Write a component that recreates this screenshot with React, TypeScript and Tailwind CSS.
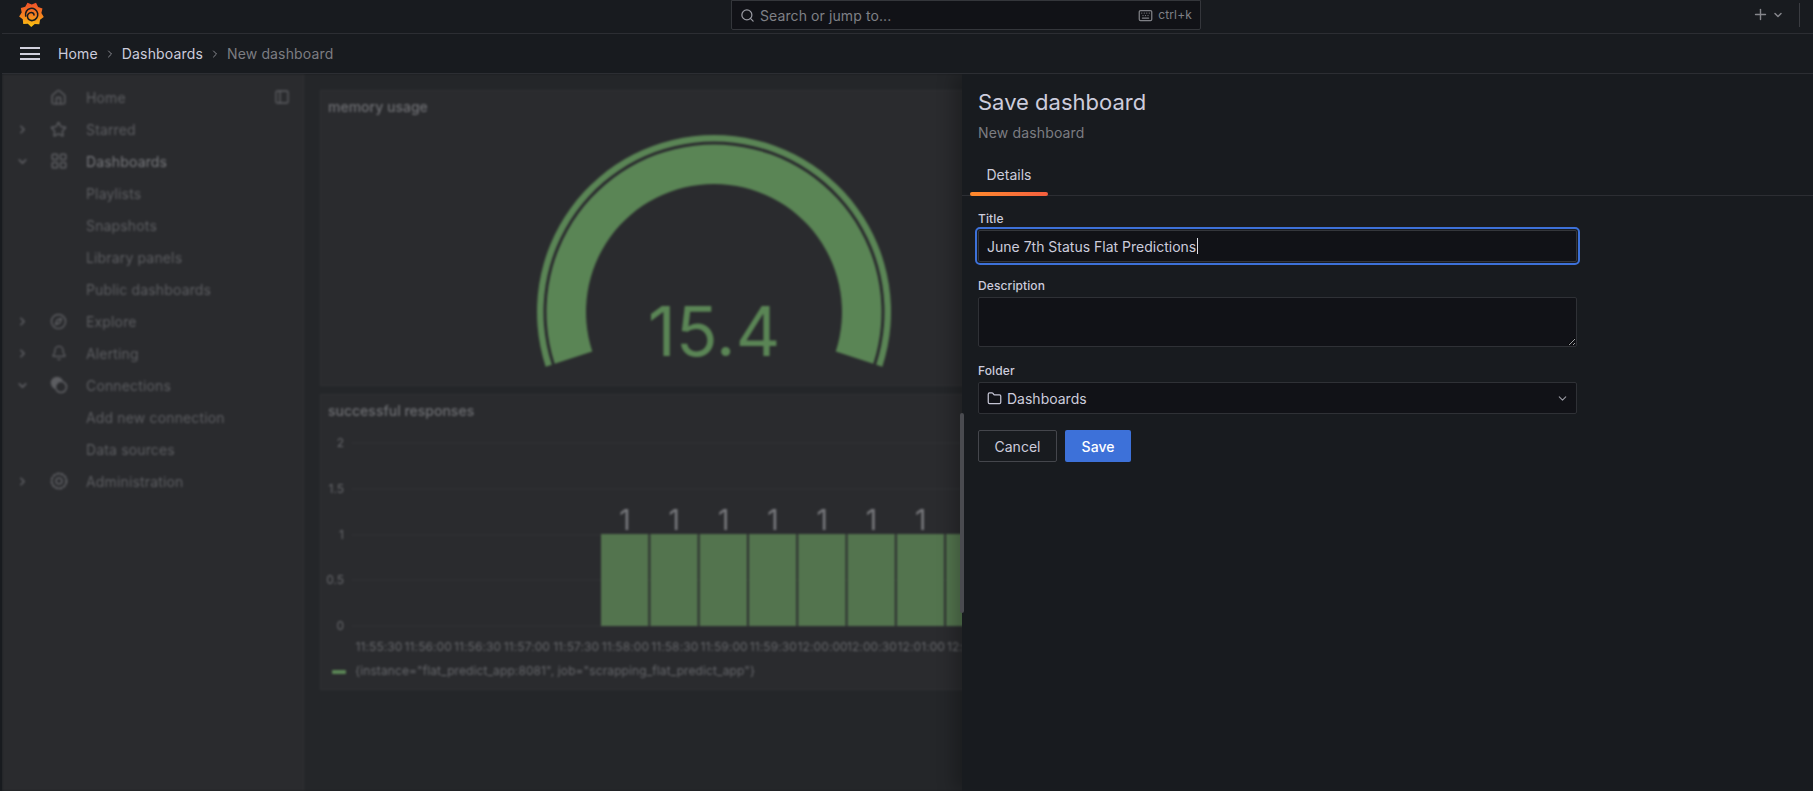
import { Bell, ChevronDown, ChevronRight, Compass, Folder, Home, Keyboard, LayoutGrid, PanelLeft, Plus, Search, Star } from "lucide-react";
import type { ReactNode } from "react";

const CX = 393;
const CY = 221;

function arc(outer: number, inner: number) {
  const a = (18 * Math.PI) / 180;
  const ox = outer * Math.cos(a);
  const oy = outer * Math.sin(a);
  const ix = inner * Math.cos(a);
  const iy = inner * Math.sin(a);
  return `M${CX - ox} ${CY + oy} A${outer} ${outer} 0 1 1 ${CX + ox} ${CY + oy} L${CX + ix} ${CY + iy} A${inner} ${inner} 0 1 0 ${CX - ix} ${CY + iy} Z`;
}

function logoPoints() {
  const pts: string[] = [];
  for (let i = 0; i < 18; i++) {
    const r = i % 2 === 0 ? 12 : 9.6;
    const t = (i / 18) * Math.PI * 2 - 1.2;
    pts.push(`${12 + r * Math.cos(t)},${12 + r * Math.sin(t)}`);
  }
  return pts.join(" ");
}

function GrafanaLogo() {
  return (
    <svg width="25" height="25" viewBox="0 0 24 24" className="ml-[17px]">
      <defs>
        <linearGradient id="logoGrad" x1="0" y1="0" x2="0" y2="1">
          <stop offset="0" stopColor="#ef4f2a" />
          <stop offset="0.55" stopColor="#f6851f" />
          <stop offset="1" stopColor="#fbc80f" />
        </linearGradient>
      </defs>
      <polygon points={logoPoints()} fill="url(#logoGrad)" />
      <path d="M6.4 13.4A5.9 5.9 0 1 1 13 17.8a4.3 4.3 0 0 1-4.9-3.9 3.7 3.7 0 0 1 3.6-3.9 2.6 2.6 0 0 1 2.7 2.5" fill="none" stroke="#181b1f" strokeWidth="1.5" strokeLinecap="round" />
    </svg>
  );
}

function ConnectionsIcon() {
  return (
    <svg width="18" height="18" viewBox="0 0 18 18" fill="none" stroke="currentColor" strokeWidth="1.6">
      <circle cx="7" cy="7" r="5.5" fill="currentColor" />
      <circle cx="11" cy="11" r="5.5" fill="#2a2b2e" />
    </svg>
  );
}

function AdminIcon() {
  return (
    <svg width="18" height="18" viewBox="0 0 18 18" fill="none" stroke="currentColor">
      <circle cx="9" cy="9" r="7.4" strokeWidth="2" strokeDasharray="3.4 0.6" />
      <circle cx="9" cy="9" r="3" strokeWidth="1.6" />
    </svg>
  );
}

interface NavRowProps {
  label: string;
  icon?: ReactNode;
  chevron?: "right" | "down";
  bright?: boolean;
  right?: ReactNode;
}

function NavRow({ label, icon, chevron, bright, right }: NavRowProps) {
  return (
    <div className="flex h-8 items-center">
      <div className="flex w-[40px] justify-center pl-[1px]">
        {chevron === "right" && <ChevronRight size={13} strokeWidth={3} />}
        {chevron === "down" && <ChevronDown size={13} strokeWidth={3} />}
      </div>
      <div className="flex w-[44px] justify-center pr-[11px]">{icon}</div>
      <span className={bright ? "text-[14px] tracking-[0.15px] text-[#77787c]" : "text-[14px] tracking-[0.15px]"}>{label}</span>
      {right && <div className="ml-auto mr-[13px]">{right}</div>}
    </div>
  );
}

function Sidebar() {
  return (
    <aside className="flex w-[302px] shrink-0 flex-col border-r border-[#2f3033] bg-[#2a2b2e] pt-[7px] text-[#5c5d61]">
      <NavRow label="Home" icon={<Home size={17} />} right={<PanelLeft size={16} />} />
      <NavRow label="Starred" icon={<Star size={17} />} chevron="right" />
      <NavRow label="Dashboards" icon={<LayoutGrid size={18} />} chevron="down" bright />
      <NavRow label="Playlists" />
      <NavRow label="Snapshots" />
      <NavRow label="Library panels" />
      <NavRow label="Public dashboards" />
      <NavRow label="Explore" icon={<Compass size={17} />} chevron="right" />
      <NavRow label="Alerting" icon={<Bell size={16} />} chevron="right" />
      <NavRow label="Connections" icon={<ConnectionsIcon />} chevron="down" />
      <NavRow label="Add new connection" />
      <NavRow label="Data sources" />
      <NavRow label="Administration" icon={<AdminIcon />} chevron="right" />
    </aside>
  );
}

function GaugePanel() {
  return (
    <section className="h-[296px] overflow-hidden border border-[#2f3033] bg-[#2a2b2e]">
      <h2 className="h-[32px] pl-[7px] pt-[5px] text-[14px] font-medium text-[#6d6e72]">memory usage</h2>
      <svg width="800" height="262" viewBox="0 32 800 262" className="block">
        <path d={arc(177, 170.5)} fill="#5a8555" />
        <path d={arc(167.5, 128)} fill="#5a8555" />
        <text x={CX} y="265" textAnchor="middle" fontSize="69" fill="#5a8555" fontFamily="Inter">15.4</text>
      </svg>
    </section>
  );
}

const times = ["11:55:30", "11:56:00", "11:56:30", "11:57:00", "11:57:30", "11:58:00", "11:58:30", "11:59:00", "11:59:30", "12:00:00", "12:00:30", "12:01:00", "12:01:30"];
const yTicks = [
  { label: "2", y: 48 },
  { label: "1.5", y: 94 },
  { label: "1", y: 140 },
  { label: "0.5", y: 185 },
  { label: "0", y: 231 },
];

function ChartPanel() {
  return (
    <section className="h-[296px] overflow-hidden border border-[#2f3033] bg-[#2a2b2e]">
      <svg width="800" height="294" viewBox="2 0 800 294" className="block" fontFamily="Inter">
        <text x="9" y="21" fontSize="14" fontWeight="500" fill="#6d6e72">successful responses</text>
        {yTicks.map((t) => (
          <g key={t.label}>
            <text x="25" y={t.y + 4} textAnchor="end" fontSize="12" fill="#66676b">{t.label}</text>
            <line x1="33" x2="802" y1={t.y} y2={t.y} stroke="#323337" />
          </g>
        ))}
        {times.map((t, i) => (
          <text key={t} x={60 + i * 49.3} y="256" textAnchor="middle" fontSize="12" letterSpacing="0.1" fill="#66676b">{t}</text>
        ))}
        {times.slice(5).map((t, i) => (
          <g key={t}>
            <rect x={282 + i * 49.3} y="139" width="47.4" height="92" fill="#53744e" />
            <text x={306 + i * 49.3} y="135" textAnchor="middle" fontSize="28" fill="#77787c">1</text>
          </g>
        ))}
        <rect x="13" y="275" width="14" height="4" rx="1" fill="#5a8555" />
        <text x="36" y="280" fontSize="12" letterSpacing="0.1" fill="#66676b">{'{instance="flat_predict_app:8081", job="scrapping_flat_predict_app"}'}</text>
      </svg>
    </section>
  );
}

function Field({ label, className, children }: { label: string; className?: string; children: ReactNode }) {
  return (
    <div className={className}>
      <label className="mb-[3px] block h-[16px] text-[12px] font-medium leading-[16px] tracking-[0.1px] text-[#ccccdc]">{label}</label>
      {children}
    </div>
  );
}

function SaveDrawer() {
  return (
    <div className="absolute bottom-0 left-[960px] right-0 top-0 bg-[#181b1f] shadow-[-8px_0_16px_rgba(0,0,0,0.25)]">
      <div className="px-4 pt-[14px]">
        <h1 className="h-[28px] text-[22px] leading-[28px] text-[#ccccdc]">Save dashboard</h1>
        <p className="mt-[7px] h-[20px] text-[14px] leading-[20px] tracking-[0.15px] text-[#7c7d82]">New dashboard</p>
      </div>
      <div className="mt-[13px] flex h-[40px] items-end border-b border-[#2c2e33] pl-2">
        <div className="relative flex h-[40px] w-[78px] items-center justify-center pb-[2px] text-[14px] text-[#ccccdc]">
          Details
          <div className="absolute inset-x-0 bottom-[-1px] h-[4px] rounded-sm bg-gradient-to-r from-[#ff8a2b] to-[#f55f3e]" />
        </div>
      </div>
      <div className="w-[615px] pl-4 pt-[15px]">
        <Field label="Title">
          <div className="flex h-[32px] items-center rounded-[2px] border border-[#34363b] bg-[#111217] pl-2 text-[14px] text-[#ccccdc] outline-2 outline-offset-1 outline-[#3d71d9]">
            June 7th Status Flat Predictions
            <span className="ml-px h-[16px] w-px bg-[#e0e0e8]" />
          </div>
        </Field>
        <Field label="Description" className="mt-[16px]">
          <textarea readOnly className="block h-[50px] w-full rounded-[2px] border border-[#2f3136] bg-[#111217]" />
        </Field>
        <Field label="Folder" className="mt-[16px]">
          <div className="flex h-[32px] items-center rounded-[2px] border border-[#2f3136] bg-[#111217] px-2 text-[14px] text-[#ccccdc]">
            <Folder size={15} className="mr-[5px] text-[#c4c4d4]" />
            Dashboards
            <ChevronDown size={13} className="ml-auto mr-[-1px] text-[#9a9ba3]" />
          </div>
        </Field>
        <div className="mt-[16px] flex gap-2">
          <button className="h-[32px] w-[79px] rounded-[2px] border border-[#44464c] text-[14px] text-[#ccccdc]">Cancel</button>
          <button className="h-[32px] w-[66px] rounded-[2px] bg-[#3d71d9] text-[14px] font-medium text-white">Save</button>
        </div>
      </div>
    </div>
  );
}

export default function App() {
  return (
    <div className="flex h-[791px] w-[1813px] flex-col overflow-hidden bg-[#181b1f] pl-[2px] font-['Inter',sans-serif]">
      <header className="flex h-[34px] shrink-0 items-center justify-between border-b border-[#2c2e33] bg-[#181b1f] pb-[4px]">
        <GrafanaLogo />
        <div className="absolute left-[731px] top-0 flex h-[30px] w-[470px] items-center rounded-b-[2px] border border-[#34363b] bg-[#111217] px-[8px] text-[#7f8086]">
          <Search size={15} className="mr-[5px] text-[#9a9ba3]" />
          <span className="text-[14px] tracking-[0.1px]">Search or jump to...</span>
          <Keyboard size={15} className="ml-auto mr-[5px]" />
          <span className="text-[12px] tracking-[0.15px]">ctrl+k</span>
        </div>
        <div className="flex items-center pr-[13px] text-[#85868b]">
          <Plus size={17} strokeWidth={2} />
          <ChevronDown size={12} strokeWidth={3} className="ml-[3px]" />
          <div className="ml-[15px] h-[24px] w-px bg-[#3a3c41]" />
        </div>
      </header>
      <nav className="flex h-[40px] shrink-0 items-center border-b border-[#2c2e33] pl-[18px] text-[14px] tracking-[0.15px]">
        <div className="flex h-[13px] w-[20px] flex-col justify-between">
          <span className="h-[2px] bg-[#d0d0dc]" />
          <span className="h-[2px] bg-[#d0d0dc]" />
          <span className="h-[2px] bg-[#d0d0dc]" />
        </div>
        <span className="ml-[18px] text-[#ccccdc]">Home</span>
        <ChevronRight size={12} className="mx-[6px] text-[#8a8b91]" />
        <span className="text-[#ccccdc]">Dashboards</span>
        <ChevronRight size={12} className="mx-[6px] text-[#8a8b91]" />
        <span className="text-[#7c7d82]">New dashboard</span>
      </nav>
      <div className="relative min-h-0 flex-1 overflow-hidden">
        <div className="flex h-full overflow-hidden blur-[1px]">
          <Sidebar />
          <main className="flex min-w-0 flex-1 flex-col gap-[8px] bg-[#242629] pl-[16px] pt-[16px]">
            <GaugePanel />
            <ChartPanel />
          </main>
        </div>
        <SaveDrawer />
        <div className="absolute left-[958px] top-[339px] h-[200px] w-[4px] rounded-full bg-[#4a4b50]" />
      </div>
    </div>
  );
}
